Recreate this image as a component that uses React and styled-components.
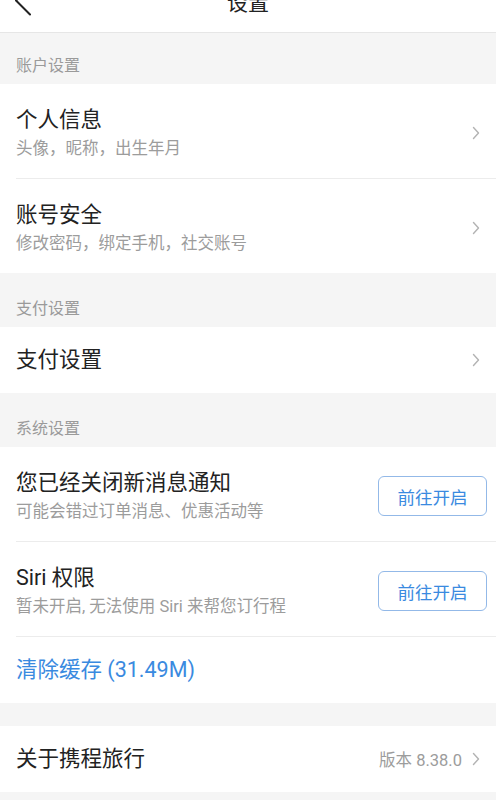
import React from "react";
import styled, { createGlobalStyle } from "styled-components";

const GlobalStyle = createGlobalStyle`
  html, body {
    margin: 0;
    padding: 0;
    background: #f5f5f5;
  }
  body {
    font-family: Roboto, "Noto Sans CJK SC", sans-serif;
    -webkit-font-smoothing: antialiased;
  }
`;

const Page = styled.div`
  width: 496px;
  min-height: 800px;
  background: #f5f5f5;
  overflow: hidden;
`;

const Header = styled.header`
  height: 58px;
  margin-top: -26px;
  background: #fff;
  border-bottom: 1px solid #e6e6e6;
  display: flex;
  align-items: center;
  justify-content: center;
  position: relative;
`;

const BackButton = styled.div`
  position: absolute;
  left: 13px;
  top: 50%;
  transform: translateY(-58%);
  display: flex;
`;

const Title = styled.h1`
  margin: 0;
  font-size: 21px;
  font-weight: 400;
  color: #222;
  line-height: 30px;
`;

const SectionLabel = styled.div`
  height: ${(p) => p.$height}px;
  box-sizing: border-box;
  padding: ${(p) => p.$height - 30}px 16px 0;
  font-size: 16px;
  line-height: 24px;
  color: #9a9a9a;
`;

const Spacer = styled.div`
  height: 23px;
`;

const Group = styled.section`
  background: #fff;
`;

const Row = styled.div`
  display: flex;
  align-items: center;
  box-sizing: border-box;
  min-height: ${(p) => (p.$tall ? 0 : 66)}px;
  padding: ${(p) => (p.$tall ? "20px 0 16px" : "0")};
  margin-left: 16px;
  padding-right: ${(p) => (p.$button ? 9 : 16)}px;
  border-bottom: ${(p) => (p.$last ? "none" : "1px solid #ececec")};
`;

const RowText = styled.div`
  flex: 1;
  display: flex;
  flex-direction: column;
  padding-top: ${(p) => (p.$tall ? 1 : 0)}px;
`;

const RowTitle = styled.div`
  font-size: 21.5px;
  line-height: 30px;
  color: ${(p) => (p.$link ? "#3a8ae0" : "#222")};
`;

const RowSub = styled.div`
  margin-top: 1px;
  font-size: 16.5px;
  line-height: 26px;
  color: #9c9c9c;
`;

const Extra = styled.span`
  font-size: 16.5px;
  color: #9c9c9c;
  margin-right: 10px;
`;

const OpenButton = styled.button`
  width: 109px;
  height: 40px;
  border: 1px solid #93b9e8;
  border-radius: 6px;
  background: #fff;
  color: #3a8ae0;
  font-family: inherit;
  font-size: 17.5px;
  padding: 0;
  cursor: pointer;
`;

function Chevron() {
  return (
    <svg width="8" height="14" viewBox="0 0 8 14" fill="none">
      <path
        d="M1.5 1.5L6.5 7L1.5 12.5"
        stroke="#b3b3b3"
        strokeWidth="1.4"
        strokeLinecap="round"
        strokeLinejoin="round"
      />
    </svg>
  );
}

function BackIcon() {
  return (
    <svg width="20" height="32" viewBox="0 0 20 32" fill="none">
      <path
        d="M17 2L3 16L17 30"
        stroke="#222"
        strokeWidth="2"
        strokeLinecap="round"
        strokeLinejoin="round"
      />
    </svg>
  );
}

function NavRow({ title, sub, extra, last }) {
  return (
    <Row $tall={!!sub} $last={last}>
      <RowText $tall={!!sub}>
        <RowTitle>{title}</RowTitle>
        {sub && <RowSub>{sub}</RowSub>}
      </RowText>
      {extra && <Extra>{extra}</Extra>}
      <Chevron />
    </Row>
  );
}

function PermissionRow({ title, sub, last }) {
  return (
    <Row $tall $button $last={last}>
      <RowText $tall>
        <RowTitle>{title}</RowTitle>
        <RowSub>{sub}</RowSub>
      </RowText>
      <OpenButton>前往开启</OpenButton>
    </Row>
  );
}

export default function App() {
  return (
    <Page>
      <GlobalStyle />
      <Header>
        <BackButton>
          <BackIcon />
        </BackButton>
        <Title>设置</Title>
      </Header>

      <SectionLabel $height={51}>账户设置</SectionLabel>
      <Group>
        <NavRow title="个人信息" sub="头像，昵称，出生年月" />
        <NavRow title="账号安全" sub="修改密码，绑定手机，社交账号" last />
      </Group>

      <SectionLabel $height={54}>支付设置</SectionLabel>
      <Group>
        <NavRow title="支付设置" last />
      </Group>

      <SectionLabel $height={54}>系统设置</SectionLabel>
      <Group>
        <PermissionRow
          title="您已经关闭新消息通知"
          sub="可能会错过订单消息、优惠活动等"
        />
        <PermissionRow title="Siri 权限" sub="暂未开启, 无法使用 Siri 来帮您订行程" />
        <Row $last>
          <RowTitle $link>清除缓存 (31.49M)</RowTitle>
        </Row>
      </Group>

      <Spacer />
      <Group>
        <NavRow title="关于携程旅行" extra="版本 8.38.0" last />
      </Group>
    </Page>
  );
}
